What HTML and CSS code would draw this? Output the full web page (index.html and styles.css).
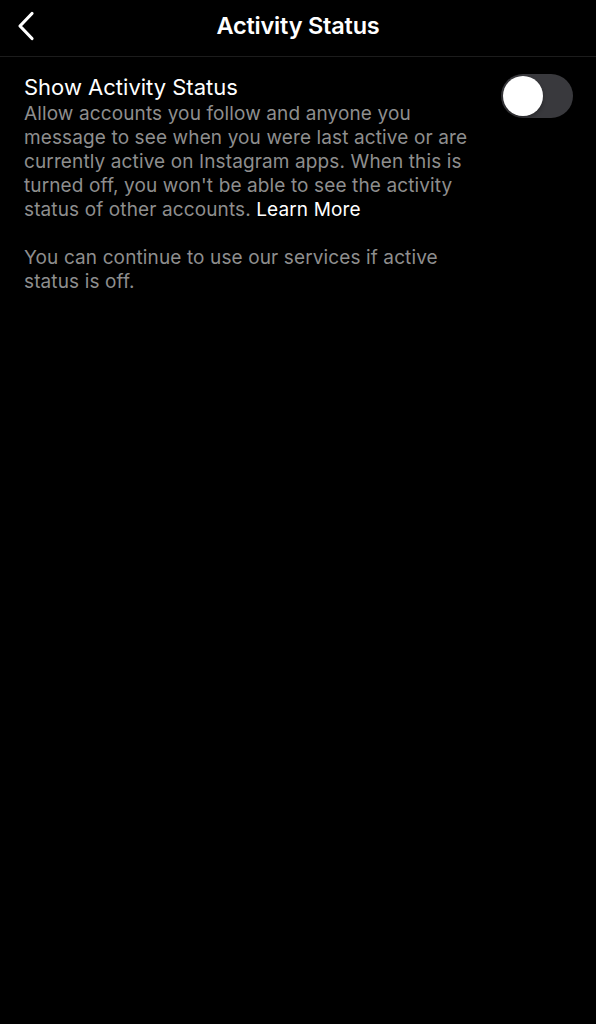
FILE: index.html
```html
<!DOCTYPE html>
<html lang="en">
<head>
    <meta charset="UTF-8">
    <meta name="viewport" content="width=device-width, initial-scale=1.0">
    <title>Activity Status</title>
    <link rel="stylesheet" href="styles.css">
</head>
<body>
    <header class="top-bar">
        <button class="back-btn" aria-label="Back">
            <svg width="22" height="30" viewBox="0 0 22 30">
                <path d="M17 2.5 L5 15 L17 27.5" fill="none" stroke="#fff" stroke-width="3.2" stroke-linecap="round" stroke-linejoin="round"/>
            </svg>
        </button>
        <h1 class="title">Activity Status</h1>
    </header>

    <main class="content">
        <div class="setting-row">
            <div class="setting-text">
                <h2 class="setting-label">Show Activity Status</h2>
                <p class="setting-desc">Allow accounts you follow and anyone you message to see when you were last active or are currently active on Instagram apps. When this is turned off, you won't be able to see the activity status of other accounts. <a href="#" class="learn-more">Learn More</a></p>
            </div>
            <div class="switch"><span class="knob"></span></div>
        </div>
        <p class="setting-desc note">You can continue to use our services if active status is off.</p>
    </main>
</body>
</html>
```

FILE: styles.css
```css
* {
    margin: 0;
    padding: 0;
    box-sizing: border-box;
}

body {
    background: #000;
    color: #fff;
    font-family: 'Inter', 'Liberation Sans', sans-serif;
    width: 596px;
    min-height: 1024px;
}

.top-bar {
    height: 57px;
    display: flex;
    align-items: center;
    justify-content: center;
    position: relative;
    border-bottom: 1px solid #1c1c1c;
}

.back-btn {
    position: absolute;
    left: 15px;
    top: 10px;
    background: none;
    border: none;
    width: 24px;
    height: 32px;
    display: flex;
    align-items: center;
}

.title {
    font-size: 23.5px;
    font-weight: 600;
    letter-spacing: -0.2px;
    margin-top: -6px;
}

.content {
    padding: 17px 24px 0 24px;
}

.setting-row {
    display: flex;
    justify-content: space-between;
    align-items: flex-start;
}

.setting-text {
    width: 462px;
}

.setting-label {
    font-size: 22px;
    font-weight: 400;
    line-height: 26px;
    margin-bottom: 2px;
}

.setting-desc {
    font-size: 19px;
    line-height: 24px;
    color: #8e8e8e;
    letter-spacing: 0.12px;
}

.learn-more {
    color: #fff;
    text-decoration: none;
}

.note {
    margin-top: 24px;
    width: 462px;
}

.switch {
    width: 72px;
    height: 44px;
    border-radius: 22px;
    background: #39393d;
    margin-top: 0;
    margin-right: -1px;
    padding: 2px;
}

.knob {
    display: block;
    width: 40px;
    height: 40px;
    border-radius: 50%;
    background: #fff;
    box-shadow: 0 2px 4px rgba(0,0,0,0.3);
}
```
